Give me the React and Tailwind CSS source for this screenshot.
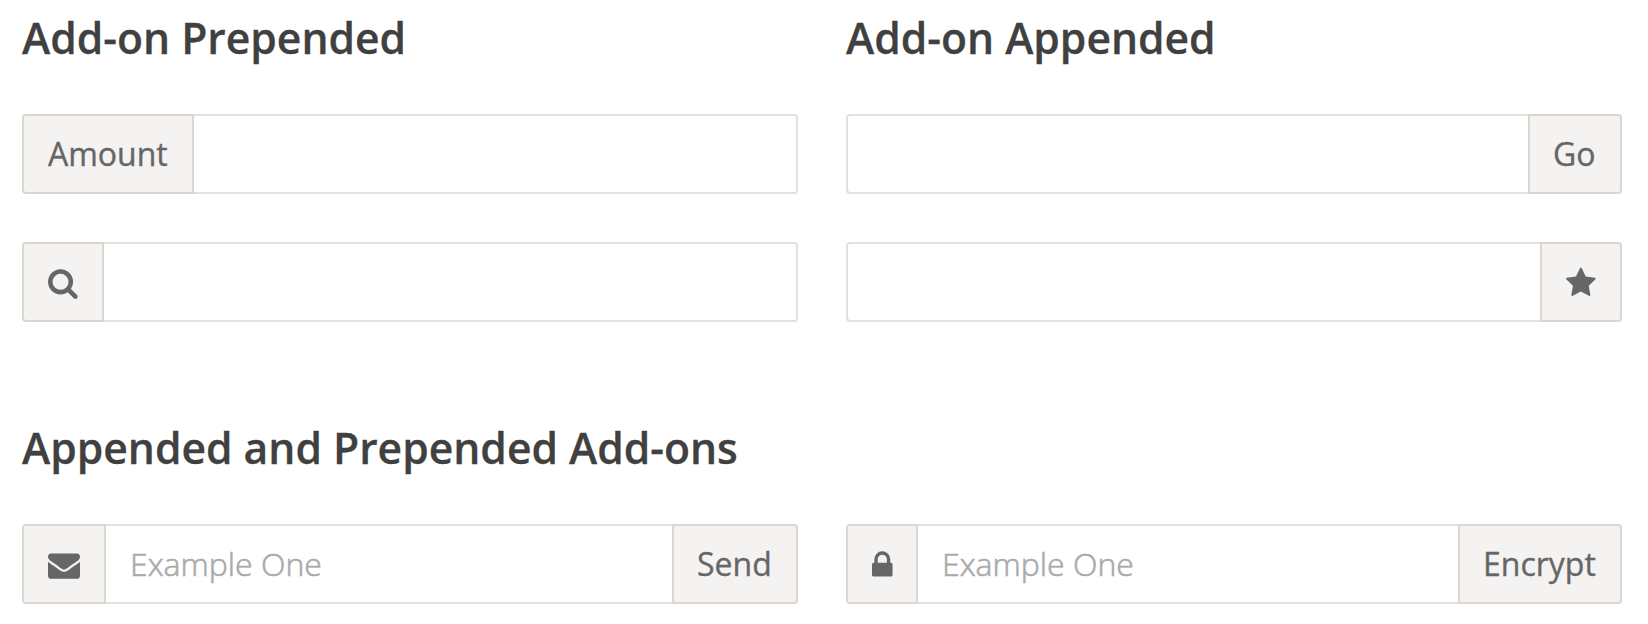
const icons = {
  search: {
    box: "64 0 1664 1792",
    width: 29.714,
    d: "M1216 832q0-185-131.5-316.5t-316.5-131.5-316.5 131.5-131.5 316.5 131.5 316.5 316.5 131.5 316.5-131.5 131.5-316.5zm512 832q0 52-38 90t-90 38q-54 0-90-38l-343-342q-179 124-399 124-143 0-273.5-55.5t-225-150-150-225-55.5-273.5 55.5-273.5 150-225 225-150 273.5-55.5 273.5 55.5 225 150 150 225 55.5 273.5q0 220-124 399l343 343q37 37 37 90z",
  },
  star: {
    box: "64 0 1664 1792",
    width: 29.714,
    d: "M1728 647q0 22-26 48l-363 354 86 500q1 7 1 20 0 21-10.5 35.5t-30.5 14.5q-19 0-40-12l-449-236-449 236q-22 12-40 12-21 0-31.5-14.5t-10.5-35.5q0-6 2-20l86-500-364-354q-25-27-25-48 0-37 56-46l502-73 225-455q19-41 49-41t49 41l225 455 502 73q56 9 56 46z",
  },
  envelope: {
    box: "0 0 1792 1792",
    width: 32,
    d: "M1792 710v794q0 66-47 113t-113 47h-1472q-66 0-113-47t-47-113v-794q44 49 101 87 362 246 497 345 57 42 92.5 65.5t94.5 48 110 24.5h2q51 0 110-24.5t94.5-48 92.5-65.5q170-123 498-345 57-39 100-87zm0-294q0 79-49 151t-122 123q-376 261-468 325-10 7-42.5 31t-54 38.5-52 32.5-57.5 27-50 9h-2q-23 0-50-9t-57.5-27-52-32.5-54-38.5-42.5-31q-91-64-262-182.5t-205-142.5q-62-42-117-115.5t-55-136.5q0-78 41.5-130t118.5-52h1472q65 0 112.5 47t47.5 113z",
  },
  lock: {
    box: "320 0 1152 1792",
    width: 20.571,
    d: "M640 768h512v-192q0-106-75-181t-181-75-181 75-75 181v192zm832 96v576q0 40-28 68t-68 28h-960q-40 0-68-28t-28-68v-576q0-40 28-68t68-28h32v-192q0-184 132-316t316-132 316 132 132 316v192h32q40 0 68 28t28 68z",
  },
};

function Icon({ name }) {
  const { box, width, d } = icons[name];
  return (
    <svg viewBox={box} width={width} height={32} fill="currentColor" className="mt-px shrink-0" aria-hidden="true">
      <path d={d} />
    </svg>
  );
}

function Addon({ children, className = "" }) {
  return (
    <span className={"flex shrink-0 items-center border-2 border-[#dbd6d0] bg-[#f4f3f2] text-[#666] [-webkit-text-stroke:0.35px] " + className}>
      {children}
    </span>
  );
}

function Group({ before, after, placeholder }) {
  const shape = before && after ? "border-x-0" : before ? "rounded-r-[4px] border-l-0" : "rounded-l-[4px] border-r-0";
  return (
    <div className="flex h-20 text-[32px]">
      {before}
      <input
        placeholder={placeholder}
        className={"min-w-0 flex-1 border-2 border-[#e4e0dc] px-6 font-light outline-none placeholder:text-[#aaa] placeholder:[-webkit-text-stroke:0.6px] " + shape}
      />
      {after}
    </div>
  );
}

const heading = "text-[42.64px] leading-[60px] font-semibold text-[#404040] [-webkit-text-stroke:0.3px]";
const left = "rounded-l-[4px] pl-6 ";
const right = "rounded-r-[4px] ";

export default function App() {
  return (
    <main className="h-[624px] bg-white pt-[7px] pr-[26px] pl-[22px] font-['Open_Sans',sans-serif]">
      <div className="grid grid-cols-2 gap-x-12">
        <h2 className={heading}>Add-on Prepended</h2>
        <h2 className={heading}>Add-on Appended</h2>
      </div>
      <div className="mt-[47px] grid grid-cols-2 gap-x-12 gap-y-12">
        <Group before={<Addon className={left + "w-[172px]"}>Amount</Addon>} />
        <Group after={<Addon className={right + "w-[94px] pl-[23px]"}>Go</Addon>} />
        <Group before={<Addon className={left + "w-[82px]"}><Icon name="search" /></Addon>} />
        <Group after={<Addon className={right + "w-[82px] pl-6"}><Icon name="star" /></Addon>} />
      </div>
      <h2 className={heading + " mt-[95px]"}>Appended and Prepended Add-ons</h2>
      <div className="mt-[47px] grid grid-cols-2 gap-x-12">
        <Group
          placeholder="Example One"
          before={<Addon className={left + "w-[84px]"}><Icon name="envelope" /></Addon>}
          after={<Addon className={right + "w-[126px] pl-[23px]"}>Send</Addon>}
        />
        <Group
          placeholder="Example One"
          before={<Addon className={left + "w-[72px]"}><Icon name="lock" /></Addon>}
          after={<Addon className={right + "w-[164px] pl-[23px]"}>Encrypt</Addon>}
        />
      </div>
    </main>
  );
}
